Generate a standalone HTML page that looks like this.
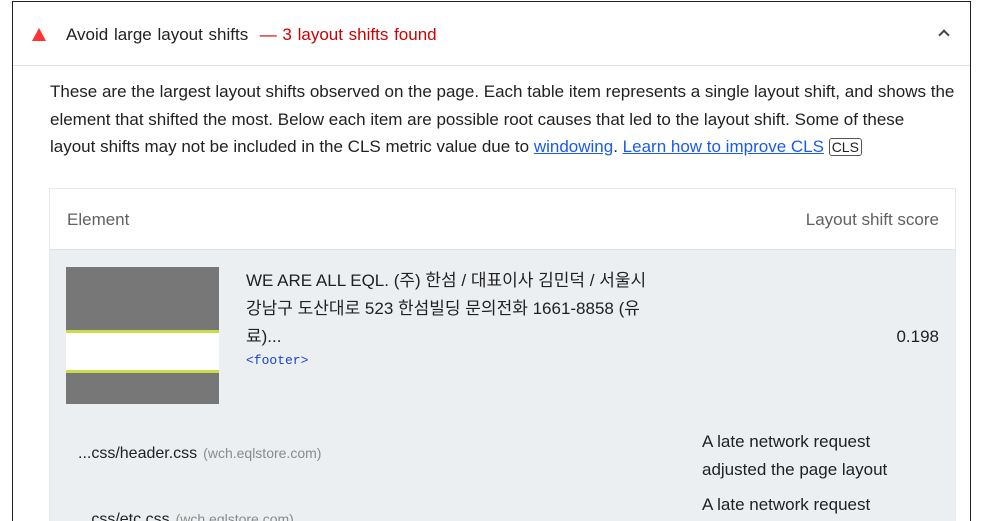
<!DOCTYPE html>
<html><head><meta charset="utf-8"><style>
*{margin:0;padding:0;box-sizing:border-box}
html,body{width:985px;height:521px;overflow:hidden}
body{background:#fff;font-family:"Liberation Sans","Noto Sans CJK KR",sans-serif;color:#212121;position:relative}
.box{position:absolute;left:12px;top:1px;width:959px;height:520px;border:1px solid #202124;border-bottom:none;overflow:hidden}
.hdr{position:absolute;left:0;top:0;width:957px;height:64px;border-bottom:1px solid #e0e0e0}
.tri{position:absolute;left:19px;top:26px;width:0;height:0;border-left:7px solid transparent;border-right:7px solid transparent;border-bottom:13px solid #f33}
.title{position:absolute;left:53px;top:23px;font-size:17px;white-space:nowrap;word-spacing:1px}
.title span{color:#c00}
.chev{position:absolute;left:927px;top:29px;width:8px;height:8px;border-left:2px solid #444;border-top:2px solid #444;transform:rotate(45deg)}
.desc{position:absolute;left:37px;top:76px;width:930px;font-size:17px;line-height:27.5px;color:#212121;white-space:nowrap}
.desc a{color:#1a5aeb;text-decoration:underline}
.cls{border:1px solid #555;border-radius:3px;font-size:14px;padding:0 2px}
.tbl{position:absolute;left:36px;top:186px;width:907px;height:334px;border:1px solid #e8e8e8;border-bottom:none;background:#eceff2;overflow:hidden}
.th{height:61px;background:#fff;position:relative;border-bottom:1px solid #e0e0e0;color:#616161;font-size:17px}
.th .l{position:absolute;left:17px;top:21px}
.th .r{position:absolute;right:16px;top:21px}
.thumb{position:absolute;left:16px;top:78px;width:153px;height:137px;background:#777}
.band{position:absolute;left:0;top:63px;width:153px;height:43px;background:#fff;border-top:3px solid #cbdc48;border-bottom:3px solid #cbdc48}
.txt{position:absolute;left:196px;top:78px;width:415px;font-size:17px;line-height:28px}
.code{font-family:"Liberation Mono",monospace;font-size:13px;color:#1a3fd0;line-height:20px}
.score{position:absolute;right:16px;top:138px;font-size:17px}
.sub{position:absolute;font-size:16px}
.sub small{font-size:14px;color:#8a8a8a;margin-left:6px}
.rt{font-size:17px}
</style></head><body>
<div class="box">
<div class="hdr"><div class="tri"></div><div class="title">Avoid large layout shifts &nbsp;<span>— 3 layout shifts found</span></div><div class="chev"></div></div>
<div class="desc">These are the largest layout shifts observed on the page. Each table item represents a single layout shift, and shows the<br>element that shifted the most. Below each item are possible root causes that led to the layout shift. Some of these<br>layout shifts may not be included in the CLS metric value due to <a>windowing</a>. <a>Learn how to improve CLS</a> <span class="cls">CLS</span></div>
<div class="tbl">
<div class="th"><span class="l">Element</span><span class="r">Layout shift score</span></div>
<div class="thumb"><div class="band"></div></div>
<div class="txt">WE ARE ALL EQL. (주) 한섬 / 대표이사 김민덕 / 서울시 강남구 도산대로 523 한섬빌딩 문의전화 1661-8858 (유료)...<div class="code">&lt;footer&gt;</div></div>
<div class="score">0.198</div>
<div class="sub" style="left:28px;top:256px">...css/header.css<small>(wch.eqlstore.com)</small></div>
<div class="sub rt" style="left:652px;top:239px;line-height:28px">A late network request<br>adjusted the page layout</div>
<div class="sub" style="left:28px;top:322px">...css/etc.css<small>(wch.eqlstore.com)</small></div>
<div class="sub rt" style="left:652px;top:306px">A late network request</div>
</div>
</div>
</body></html>
